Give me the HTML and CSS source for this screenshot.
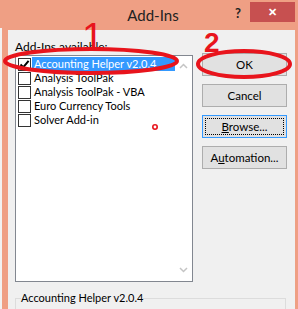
FILE: index.html
```html
<!DOCTYPE html>
<html lang="en">

<head>
    <meta charset="UTF-8">
    <title>Add-Ins</title>
    <link rel="stylesheet" href="styles.css">
</head>

<body>

    <div class="screen">
        <div class="edge"></div>
        <div class="window">
            <div class="titlebar">
                <span></span>
                <span class="title">Add-Ins</span>
                <div class="controls">
                    <span class="help">?</span>
                    <span class="close">&#x2715;</span>
                </div>
            </div>
            <div class="content">
                <div class="top">
                    <div class="left">
                        <div class="caption">Add-Ins available:</div>
                        <div class="listbox">
                            <ul class="items">
                                <li class="selected">
                                    <span class="box">
                                        <svg width="11" height="11" viewBox="0 0 11 11"><path d="M1.5 5.5 L4.2 8.3 L9.6 1.8" fill="none" stroke="#000" stroke-width="2" /></svg>
                                    </span>
                                    <span class="name">Accounting Helper v2.0.4</span>
                                </li>
                                <li><span class="box"></span><span class="name">Analysis ToolPak</span></li>
                                <li><span class="box"></span><span class="name">Analysis ToolPak - VBA</span></li>
                                <li><span class="box"></span><span class="name">Euro Currency Tools</span></li>
                                <li><span class="box"></span><span class="name">Solver Add-in</span></li>
                            </ul>
                            <div class="scroll">
                                <svg width="9" height="6" viewBox="0 0 9 6"><path d="M1 5 L4.5 1.5 L8 5" fill="none" stroke="#c4c4c4" stroke-width="1.5" /></svg>
                                <svg width="9" height="6" viewBox="0 0 9 6"><path d="M1 1 L4.5 4.5 L8 1" fill="none" stroke="#c4c4c4" stroke-width="1.5" /></svg>
                            </div>
                        </div>
                    </div>
                    <div class="buttons">
                        <button class="btn">OK</button>
                        <button class="btn">Cancel</button>
                        <button class="btn focused"><span class="focus"><u>B</u>rowse...</span></button>
                        <button class="btn">A<u>u</u>tomation...</button>
                    </div>
                </div>
                <fieldset class="group">
                    <legend>Accounting Helper v2.0.4</legend>
                </fieldset>
            </div>
        </div>

        <!-- red hand-drawn markup on top of the dialog -->
        <svg class="marks" width="298" height="309" viewBox="0 0 298 309">
            <ellipse cx="91" cy="61" rx="86" ry="12" fill="none" stroke="#e8141c" stroke-width="4" />
            <ellipse cx="244" cy="64" rx="46" ry="13" fill="none" stroke="#e8141c" stroke-width="4" />
            <circle cx="155" cy="127" r="2.2" fill="none" stroke="#e8141c" stroke-width="1.6" />
            <text x="82" y="50" class="num one">1</text>
            <text x="204" y="52" class="num two">2</text>
        </svg>
    </div>

</body>

</html>
```

FILE: styles.css
```css
* {
    margin: 0;
    padding: 0;
    box-sizing: border-box;
}

body {
    font-family: "Segoe UI", Lato, "Liberation Sans", sans-serif;
    font-size: 11px;
    color: #000;
    background: #ef9f84;
}

.screen {
    position: relative;
    width: 298px;
    height: 309px;
    display: flex;
    overflow: hidden;
    background: #ef9f84;
}

.edge {
    width: 3px;
    margin-top: 28px;
    background: #f2f2f2;
}

.window {
    flex: 1;
    display: flex;
    flex-direction: column;
    padding: 0 3px 0 6px;
}

.titlebar {
    height: 31px;
    display: grid;
    grid-template-columns: 1fr auto 1fr;
    align-items: start;
}

.title {
    font-size: 15px;
    line-height: 30px;
    color: #222;
    padding-left: 3px;
}

.controls {
    display: flex;
    justify-content: flex-end;
    align-items: flex-start;
}

.help {
    font-weight: bold;
    font-size: 13px;
    line-height: 26px;
    color: #222;
    margin-right: 9px;
}

.close {
    width: 45px;
    height: 20px;
    margin-top: 2px;
    background: #c75050;
    color: #fff;
    font-size: 11px;
    font-weight: bold;
    text-align: center;
    line-height: 20px;
}

.content {
    flex: 1;
    background: #f0f0f0;
    padding: 8px 8px 0 7px;
}

.top {
    display: flex;
    gap: 9px;
}

.caption {
    line-height: 17px;
    font-size: 12px;
}

.listbox {
    width: 178px;
    height: 227px;
    border: 1px solid #828790;
    background: #fff;
    display: flex;
}

.items {
    flex: 1;
    list-style: none;
    padding: 1px 0 0 2px;
}

.items li {
    height: 14px;
    display: flex;
    align-items: center;
}

.box {
    width: 13px;
    height: 13px;
    border: 1px solid #333;
    background: #fff;
    display: flex;
    align-items: center;
    justify-content: center;
}

.name {
    flex: 1;
    height: 14px;
    line-height: 14px;
    padding-left: 2px;
    margin-left: 1px;
    white-space: nowrap;
}

.selected .name {
    background: #3399ff;
    color: #fff;
}

.scroll {
    width: 17px;
    background: #fff;
    display: flex;
    flex-direction: column;
    justify-content: space-between;
    align-items: center;
    padding: 7px 0 8px;
}

.buttons {
    display: flex;
    flex-direction: column;
    gap: 8px;
    padding-top: 15px;
}

.btn {
    width: 85px;
    height: 23px;
    border: 1px solid #adadad;
    background: #e1e1e1;
    font: inherit;
    font-size: 11.5px;
    color: #000;
}

.focused {
    border-color: #3399ff;
    padding: 2px;
}

.focus {
    display: block;
    height: 100%;
    border: 1px dotted #000;
    line-height: 15px;
}

.group {
    margin-top: 9px;
    width: 271px;
    height: 40px;
    border: 1px solid #dcdcdc;
    padding: 0 5px;
}

.group legend {
    padding: 0;
    line-height: 14px;
}

.marks {
    position: absolute;
    top: 0;
    left: 0;
    pointer-events: none;
}

.num {
    fill: #e8141c;
    font-family: "Liberation Sans", Arial, sans-serif;
}

.one {
    font-size: 39px;
}

.two {
    font-size: 28px;
    font-weight: bold;
}
```
